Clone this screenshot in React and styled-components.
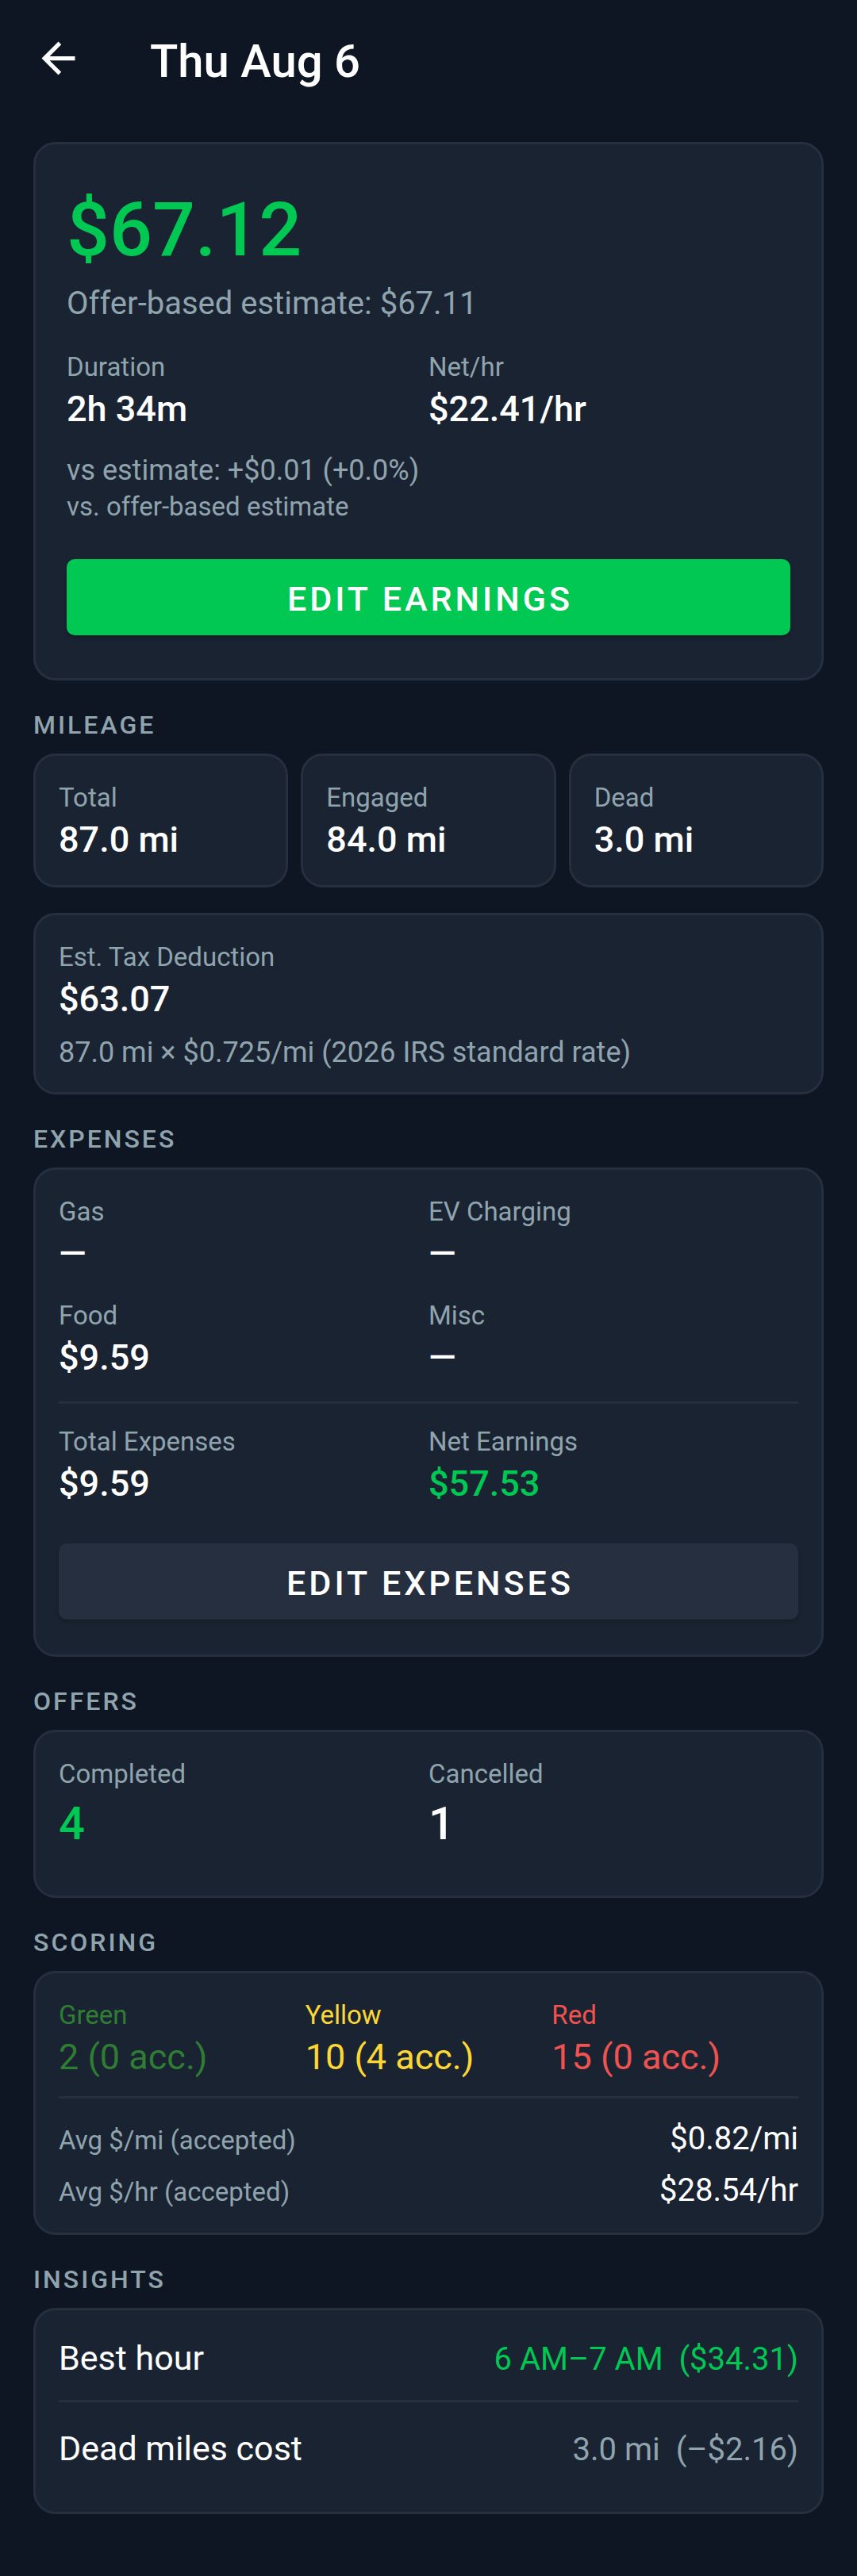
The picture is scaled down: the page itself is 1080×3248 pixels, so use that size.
import React from 'react'
import styled, { createGlobalStyle } from 'styled-components'
import { MdArrowBack } from 'react-icons/md'

const colors = {
    page: '#0f1623',
    card: '#1a2332',
    line: '#262f3f',
    muted: '#90a4ae',
    text: '#ffffff',
    accent: '#00c853',
    green: '#2e7d32',
    yellow: '#fdd835',
    red: '#ef5350',
}

function Metric({ label, value, color, labelColor, large, light }) {
    return (
        <MetricBox>
            <Label $color={labelColor}>{label}</Label>
            <Value $color={color} $large={large} $light={light}>{value}</Value>
        </MetricBox>
    )
}

function App() {
    return (
        <>
            <GlobalStyle />
            <Header>
                <BackButton type="button" aria-label="Back">
                    <MdArrowBack />
                </BackButton>
                <Title>Thu Aug 6</Title>
            </Header>
            <Main>
                <SummaryCard>
                    <Amount>$67.12</Amount>
                    <Estimate>Offer-based estimate: $67.11</Estimate>
                    <Columns>
                        <Metric label="Duration" value="2h 34m" />
                        <Metric label="Net/hr" value="$22.41/hr" />
                    </Columns>
                    <Compare>vs estimate: +$0.01 (+0.0%)</Compare>
                    <Label>vs. offer-based estimate</Label>
                    <ActionButton type="button" $primary>Edit earnings</ActionButton>
                </SummaryCard>

                <SectionTitle>Mileage</SectionTitle>
                <Tiles>
                    <Card><Metric label="Total" value="87.0 mi" /></Card>
                    <Card><Metric label="Engaged" value="84.0 mi" /></Card>
                    <Card><Metric label="Dead" value="3.0 mi" /></Card>
                </Tiles>
                <Card>
                    <Metric label="Est. Tax Deduction" value="$63.07" />
                    <Note>87.0 mi × $0.725/mi (2026 IRS standard rate)</Note>
                </Card>

                <SectionTitle>Expenses</SectionTitle>
                <Card>
                    <Columns>
                        <Metric label="Gas" value="—" />
                        <Metric label="EV Charging" value="—" />
                        <Metric label="Food" value="$9.59" />
                        <Metric label="Misc" value="—" />
                    </Columns>
                    <Divider />
                    <Columns>
                        <Metric label="Total Expenses" value="$9.59" />
                        <Metric label="Net Earnings" value="$57.53" color={colors.accent} />
                    </Columns>
                    <ActionButton type="button">Edit expenses</ActionButton>
                </Card>

                <SectionTitle>Offers</SectionTitle>
                <RoomyCard>
                    <Columns>
                        <Metric label="Completed" value="4" color={colors.accent} large />
                        <Metric label="Cancelled" value="1" large />
                    </Columns>
                </RoomyCard>

                <SectionTitle>Scoring</SectionTitle>
                <Card>
                    <Columns $count={3}>
                        <Metric label="Green" value="2 (0 acc.)" labelColor={colors.green} color={colors.green} light />
                        <Metric label="Yellow" value="10 (4 acc.)" labelColor={colors.yellow} color={colors.yellow} light />
                        <Metric label="Red" value="15 (0 acc.)" labelColor={colors.red} color={colors.red} light />
                    </Columns>
                    <Divider $before={18} $after={24} />
                    <Averages>
                        <Row>
                            <Label>Avg $/mi (accepted)</Label>
                            <RowValue>$0.82/mi</RowValue>
                        </Row>
                        <Row>
                            <Label>Avg $/hr (accepted)</Label>
                            <RowValue>$28.54/hr</RowValue>
                        </Row>
                    </Averages>
                </Card>

                <SectionTitle>Insights</SectionTitle>
                <RoomyCard>
                    <Row>
                        <RowName>Best hour</RowName>
                        <RowValue $color={colors.accent}>{'6 AM–7 AM  ($34.31)'}</RowValue>
                    </Row>
                    <Divider $after={29} />
                    <Row>
                        <RowName>Dead miles cost</RowName>
                        <RowValue $color={colors.muted}>{'3.0 mi  (–$2.16)'}</RowValue>
                    </Row>
                </RoomyCard>
            </Main>
        </>
    )
}

export default App

const GlobalStyle = createGlobalStyle`
    * {
        box-sizing: border-box;
    }

    body {
        margin: 0;
        background: ${colors.page};
        color: ${colors.text};
        font-family: Roboto, sans-serif;
    }

    h1, h2, p {
        margin: 0;
    }
`

const Header = styled.header`
    display: flex;
    align-items: flex-start;
    gap: 84px;
    padding: 42px 42px 0;
`

const BackButton = styled.button`
    display: flex;
    padding: 0;
    border: 0;
    background: none;
    color: ${colors.text};
    font-size: 63px;
    cursor: pointer;
`

const Title = styled.h1`
    font-size: 58px;
    font-weight: 500;
    line-height: 70px;
`

const Main = styled.main`
    padding: 67px 42px 77px;
`

const Card = styled.section`
    padding: 31px 29px 26px;
    border: 3px solid ${colors.line};
    border-radius: 28px;
    background: ${colors.card};
`

const SummaryCard = styled(Card)`
    padding: 46px 39px 36px;
`

const RoomyCard = styled(Card)`
    padding-bottom: 51px;
`

const Tiles = styled.div`
    display: grid;
    grid-template-columns: repeat(3, 1fr);
    gap: 16px;
    margin-bottom: 32px;
`

const Columns = styled.div`
    display: grid;
    grid-template-columns: repeat(${(props) => props.$count || 2}, 1fr);
    row-gap: 25px;
`

const SectionTitle = styled.h2`
    margin: 34px 0 14px;
    color: ${colors.muted};
    font-size: 32px;
    font-weight: 500;
    line-height: 44px;
    letter-spacing: 3px;
    text-transform: uppercase;
`

const Amount = styled.p`
    color: ${colors.accent};
    font-size: 95px;
    font-weight: 500;
    line-height: 124px;
`

const Estimate = styled.p`
    margin: 4px 0 31px;
    color: ${colors.muted};
    font-size: 40px;
    line-height: 54px;
`

const Compare = styled.p`
    margin-top: 22px;
    color: ${colors.muted};
    font-size: 36px;
    line-height: 48px;
`

const Note = styled.p`
    margin-top: 12px;
    color: ${colors.muted};
    font-size: 36px;
    line-height: 48px;
`

const MetricBox = styled.div`
    display: flex;
    flex-direction: column;
`

const Label = styled.div`
    color: ${(props) => props.$color || colors.muted};
    font-size: 33px;
    line-height: 44px;
`

const Value = styled.div`
    color: ${(props) => props.$color || colors.text};
    font-size: ${(props) => (props.$large ? 58 : 45)}px;
    font-weight: ${(props) => (props.$light ? 400 : 500)};
    line-height: ${(props) => (props.$large ? 80 : 62)}px;
`

const Divider = styled.hr`
    height: 3px;
    margin: ${(props) => props.$before || 24}px 0 ${(props) => props.$after || 26}px;
    border: 0;
    background: ${colors.line};
`

const Averages = styled.div`
    display: flex;
    flex-direction: column;
    gap: 11px;
`

const Row = styled.div`
    display: flex;
    align-items: baseline;
    justify-content: space-between;
`

const RowName = styled.div`
    font-size: 43px;
    line-height: 58px;
`

const RowValue = styled.div`
    color: ${(props) => props.$color || colors.text};
    font-size: 40px;
    line-height: 54px;
    white-space: pre;
`

// left padding balances the letter spacing after the last letter
const ActionButton = styled.button`
    display: block;
    width: 100%;
    height: 96px;
    margin: 44px 0 18px;
    padding: 4px 0 0 4px;
    border: 0;
    border-radius: 10px;
    background: ${(props) => (props.$primary ? colors.accent : colors.line)};
    box-shadow: 0 3px 5px rgba(0, 0, 0, 0.2);
    color: ${colors.text};
    font-family: inherit;
    font-size: 43px;
    font-weight: 500;
    letter-spacing: 4px;
    text-transform: uppercase;
    cursor: pointer;
`
